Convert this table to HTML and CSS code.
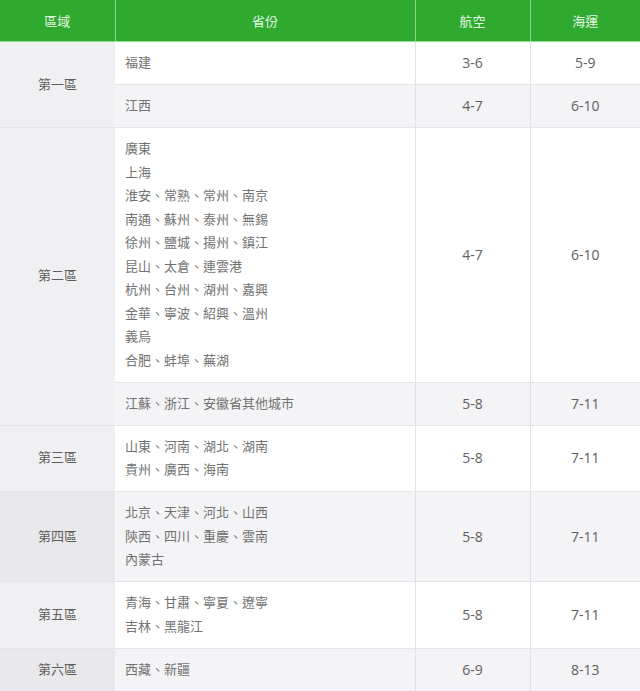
FILE: index.html
```html
<!DOCTYPE html>
<html lang="zh-Hant">
<head>
<meta charset="utf-8">
<title>區域</title>
<link rel="stylesheet" href="styles.css">
</head>
<body>
<table class="rates">
  <colgroup>
    <col class="c-zone">
    <col class="c-prov">
    <col class="c-air">
    <col class="c-sea">
  </colgroup>
  <thead>
    <tr>
      <th>區域</th>
      <th>省份</th>
      <th>航空</th>
      <th>海運</th>
    </tr>
  </thead>
  <tbody>
    <tr class="odd">
      <td class="zone" rowspan="2">第一區</td>
      <td class="prov">福建</td>
      <td class="num">3-6</td>
      <td class="num">5-9</td>
    </tr>
    <tr class="even">
      <td class="prov">江西</td>
      <td class="num">4-7</td>
      <td class="num">6-10</td>
    </tr>
    <tr class="odd">
      <td class="zone" rowspan="2">第二區</td>
      <td class="prov">廣東<br>上海<br>淮安、常熟、常州、南京<br>南通、蘇州、泰州、無錫<br>徐州、鹽城、揚州、鎮江<br>昆山、太倉、連雲港<br>杭州、台州、湖州、嘉興<br>金華、寧波、紹興、溫州<br>義烏<br>合肥、蚌埠、蕪湖</td>
      <td class="num">4-7</td>
      <td class="num">6-10</td>
    </tr>
    <tr class="even">
      <td class="prov">江蘇、浙江、安徽省其他城市</td>
      <td class="num">5-8</td>
      <td class="num">7-11</td>
    </tr>
    <tr class="odd">
      <td class="zone">第三區</td>
      <td class="prov">山東、河南、湖北、湖南<br>貴州、廣西、海南</td>
      <td class="num">5-8</td>
      <td class="num">7-11</td>
    </tr>
    <tr class="even">
      <td class="zone">第四區</td>
      <td class="prov">北京、天津、河北、山西<br>陝西、四川、重慶、雲南<br>內蒙古</td>
      <td class="num">5-8</td>
      <td class="num">7-11</td>
    </tr>
    <tr class="odd">
      <td class="zone">第五區</td>
      <td class="prov">青海、甘肅、寧夏、遼寧<br>吉林、黑龍江</td>
      <td class="num">5-8</td>
      <td class="num">7-11</td>
    </tr>
    <tr class="even">
      <td class="zone">第六區</td>
      <td class="prov">西藏、新疆</td>
      <td class="num">6-9</td>
      <td class="num">8-13</td>
    </tr>
  </tbody>
</table>
</body>
</html>
```
FILE: styles.css
```css
html, body {
  margin: 0;
  padding: 0;
  background: #ffffff;
}

.rates {
  width: 640px;
  border-collapse: collapse;
  table-layout: fixed;
  font-family: "Open Sans", "Noto Sans CJK TC", sans-serif;
  font-size: 13px;
}

.c-zone { width: 115px; }
.c-prov { width: 300px; }
.c-air { width: 115px; }
.c-sea { width: 110px; }

.rates th {
  height: 41px;
  padding: 0;
  background: #2faa2f;
  color: #e3f6e3;
  font-weight: normal;
  font-size: 13px;
  text-align: center;
  border-left: 1px solid #86d986;
  border-bottom: 1px solid #8ee08e;
}

.rates th:first-child {
  border-left: none;
}

.rates td {
  padding: 9px 0 9.5px;
  line-height: 23.5px;
  color: #727272;
  border-bottom: 1px solid #e6e4e8;
  vertical-align: middle;
}

.odd td { background: #ffffff; }
.even td { background: #f4f3f5; }

.rates td.zone {
  text-align: center;
  background: #f0eff2;
  color: #5e5e5e;
}

.even td.zone {
  background: #e9e8eb;
}

.rates td.prov {
  padding-left: 10px;
}

.rates td.num {
  text-align: center;
  font-size: 14px;
  color: #606060;
  border-left: 1px solid #e2e0e4;
}
```
